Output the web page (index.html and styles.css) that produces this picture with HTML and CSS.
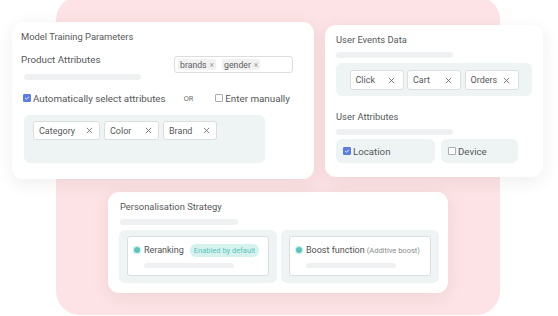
FILE: index.html
```html
<!DOCTYPE html>
<html lang="en">

<head>
    <meta charset="utf-8">
    <meta name="viewport" content="width=device-width, initial-scale=1.0">
    <title>Model setup</title>
    <link rel="stylesheet" href="styles.css">
</head>

<body>
    <div class="stage">
        <div class="backdrop"></div>

        <div class="content">
            <div class="top_row">

                <section class="card card_model">
                    <h2 class="card_title">Model Training Parameters</h2>

                    <div class="product_row">
                        <div class="product_label">
                            <p class="label">Product Attributes</p>
                            <div class="skeleton skeleton_product"></div>
                        </div>
                        <div class="tag_input">
                            <span class="mini_tag">brands <span class="mini_x">&times;</span></span>
                            <span class="mini_tag">gender <span class="mini_x">&times;</span></span>
                        </div>
                    </div>

                    <div class="choice_row">
                        <label class="check_item">
                            <span class="box checked"><svg viewBox="0 0 8 8"><path d="M1.6 4.1 L3.3 5.7 L6.4 2.3" /></svg></span>
                            Automatically select attributes
                        </label>
                        <span class="or">OR</span>
                        <label class="check_item manual">
                            <span class="box"></span>
                            Enter manually
                        </label>
                    </div>

                    <div class="panel attr_panel">
                        <span class="chip chip_category">Category <svg class="x" viewBox="0 0 8 8"><path d="M1 1 L7 7 M7 1 L1 7" /></svg></span>
                        <span class="chip chip_color">Color <svg class="x" viewBox="0 0 8 8"><path d="M1 1 L7 7 M7 1 L1 7" /></svg></span>
                        <span class="chip chip_brand">Brand <svg class="x" viewBox="0 0 8 8"><path d="M1 1 L7 7 M7 1 L1 7" /></svg></span>
                    </div>
                </section>

                <section class="card card_user">
                    <h2 class="card_title">User Events Data</h2>
                    <div class="skeleton skeleton_user"></div>

                    <div class="panel events_panel">
                        <span class="chip chip_event">Click <svg class="x" viewBox="0 0 8 8"><path d="M1 1 L7 7 M7 1 L1 7" /></svg></span>
                        <span class="chip chip_event">Cart <svg class="x" viewBox="0 0 8 8"><path d="M1 1 L7 7 M7 1 L1 7" /></svg></span>
                        <span class="chip chip_event">Orders <svg class="x" viewBox="0 0 8 8"><path d="M1 1 L7 7 M7 1 L1 7" /></svg></span>
                    </div>

                    <h3 class="card_title sub_title">User Attributes</h3>
                    <div class="skeleton skeleton_user"></div>

                    <div class="user_attrs">
                        <label class="panel attr_box location">
                            <span class="box checked"><svg viewBox="0 0 8 8"><path d="M1.6 4.1 L3.3 5.7 L6.4 2.3" /></svg></span>
                            Location
                        </label>
                        <label class="panel attr_box device">
                            <span class="box"></span>
                            Device
                        </label>
                    </div>
                </section>

            </div>

            <section class="card card_strategy">
                <h2 class="card_title">Personalisation Strategy</h2>
                <div class="skeleton skeleton_strategy"></div>

                <div class="strategy_row">
                    <div class="panel option_panel">
                        <div class="option">
                            <div class="option_head">
                                <span class="radio"></span>
                                <span class="option_name">Reranking</span>
                                <span class="badge">Enabled by default</span>
                            </div>
                            <div class="skeleton skeleton_option"></div>
                        </div>
                    </div>
                    <div class="panel option_panel">
                        <div class="option">
                            <div class="option_head">
                                <span class="radio"></span>
                                <span class="option_name">Boost function</span>
                                <span class="hint">(Additive boost)</span>
                            </div>
                            <div class="skeleton skeleton_option"></div>
                        </div>
                    </div>
                </div>
            </section>
        </div>
    </div>
</body></html>
```

FILE: styles.css
```css
* {
    margin: 0;
    padding: 0;
    box-sizing: border-box;
}

body {
    background: #ffffff;
    font-family: Roboto, "Noto Sans", sans-serif;
    color: #55585a;
}

.stage {
    position: relative;
    width: 558px;
    height: 316px;
    overflow: hidden;
}

/* pink shape behind the cards */
.backdrop {
    position: absolute;
    left: 56px;
    top: -4px;
    width: 444px;
    height: 319px;
    border-radius: 24px;
    background: #fde3e5;
}

.content {
    position: relative;
    padding: 22px 0 0 12px;
}

.top_row {
    display: flex;
    align-items: flex-start;
    gap: 11px;
}

.card {
    background: #ffffff;
    border-radius: 11px;
    box-shadow: 0 4px 18px rgba(60, 40, 40, 0.08);
}

.card_title {
    font-size: 9.4px;
    font-weight: 400;
    line-height: 14px;
    color: #55585a;
}

.skeleton {
    height: 6px;
    border-radius: 3px;
    background: #eff0f1;
}

.panel {
    background: #eef4f4;
    border-radius: 6px;
}

.chip {
    display: flex;
    align-items: center;
    justify-content: space-between;
    height: 19px;
    padding: 0 6px 0 5px;
    background: #ffffff;
    border: 1px solid #dcdddd;
    border-radius: 3px;
    font-size: 9px;
    color: #55585a;
    white-space: nowrap;
}

.x {
    width: 7px;
    height: 7px;
    stroke: #6b6d6e;
    stroke-width: 1;
    fill: none;
}

.box {
    display: inline-flex;
    flex-shrink: 0;
    width: 8px;
    height: 8px;
    border: 1px solid #a9abac;
    border-radius: 1px;
    background: #ffffff;
}

.box.checked {
    border-color: #5a7ce4;
    background: #5a7ce4;
}

.box svg {
    width: 100%;
    height: 100%;
    stroke: #ffffff;
    stroke-width: 1.2;
    fill: none;
}

/* card 1 */
.card_model {
    width: 302px;
    height: 157px;
    padding: 8px 0 0 9px;
}

.product_row {
    display: flex;
    margin-top: 9px;
}

.product_label {
    width: 153px;
}

.label {
    font-size: 9.8px;
    line-height: 14px;
}

.skeleton_product {
    width: 117px;
    margin: 7px 0 0 3px;
}

.tag_input {
    display: flex;
    align-items: center;
    gap: 6px;
    width: 119px;
    height: 17px;
    margin-top: 3px;
    padding: 0 3px;
    border: 1px solid #dcdddd;
    border-radius: 3px;
}

.mini_tag {
    display: flex;
    align-items: center;
    gap: 3px;
    height: 11px;
    padding: 0 2px;
    background: #f1f1f2;
    border-radius: 2px;
    font-size: 8.7px;
    color: #5d6061;
    white-space: nowrap;
}

.mini_x {
    font-size: 8.5px;
    color: #9a9c9d;
}

.choice_row {
    display: flex;
    align-items: center;
    height: 14px;
    margin-top: 11px;
    padding-left: 2px;
}

.check_item {
    display: flex;
    align-items: center;
    gap: 2px;
    font-size: 9.8px;
    color: #55585a;
    white-space: nowrap;
}

.or {
    margin-left: 18px;
    font-size: 7.4px;
    color: #6a6c6d;
}

.manual {
    margin-left: 22px;
}

.attr_panel {
    display: flex;
    gap: 4px;
    width: 241px;
    height: 48px;
    margin: 10px 0 0 3px;
    padding: 6px 9px;
}

.chip_category {
    width: 67px;
}

.chip_color {
    width: 55px;
}

.chip_brand {
    width: 54px;
}

/* card 2 */
.card_user {
    width: 218px;
    height: 152px;
    margin-top: 3px;
    padding: 8px 0 0 11px;
}

.skeleton_user {
    width: 117px;
    margin-top: 5px;
}

.events_panel {
    display: flex;
    justify-content: center;
    gap: 3.5px;
    width: 196px;
    height: 33px;
    margin-top: 5px;
    padding-top: 7px;
}

.chip_event {
    width: 54px;
    height: 20px;
    padding: 0 8px 0 5px;
}

.sub_title {
    margin-top: 14px;
}

.user_attrs {
    display: flex;
    gap: 6px;
    margin-top: 4px;
}

.attr_box {
    display: flex;
    align-items: center;
    gap: 2px;
    height: 24px;
    padding-left: 7px;
    font-size: 9.7px;
    color: #55585a;
}

.location {
    width: 99px;
}

.device {
    width: 77px;
}

/* card 3 */
.card_strategy {
    width: 340px;
    height: 101px;
    margin: 13px 0 0 96px;
    padding: 8px 0 0 12px;
}

.skeleton_strategy {
    width: 118px;
    margin-top: 5px;
}

.strategy_row {
    display: flex;
    gap: 4px;
    margin-top: 5px;
    margin-left: -1px;
}

.option_panel {
    width: 158px;
    height: 53px;
    padding: 6px 8px 0;
}

.option {
    height: 40px;
    padding: 6px 0 0 6px;
    background: #ffffff;
    border: 1px solid #dcdddd;
    border-radius: 3px;
}

.option_head {
    display: flex;
    align-items: center;
    height: 14px;
    white-space: nowrap;
}

.radio {
    flex-shrink: 0;
    width: 6px;
    height: 6px;
    border-radius: 50%;
    background: #5dc3bd;
    box-shadow: 0 0 0 1.5px #d4f1ee;
}

.option_name {
    margin-left: 4px;
    font-size: 9px;
    color: #4f5253;
}

.badge {
    margin-left: 6px;
    padding: 2px 4px;
    border-radius: 6px;
    background: #d5f2ef;
    font-size: 7.5px;
    color: #5cc3b8;
}

.hint {
    margin-left: 2px;
    font-size: 7.5px;
    color: #8a8c8d;
}

.skeleton_option {
    width: 90px;
    height: 5px;
    margin: 6px 0 0 10px;
}
```
